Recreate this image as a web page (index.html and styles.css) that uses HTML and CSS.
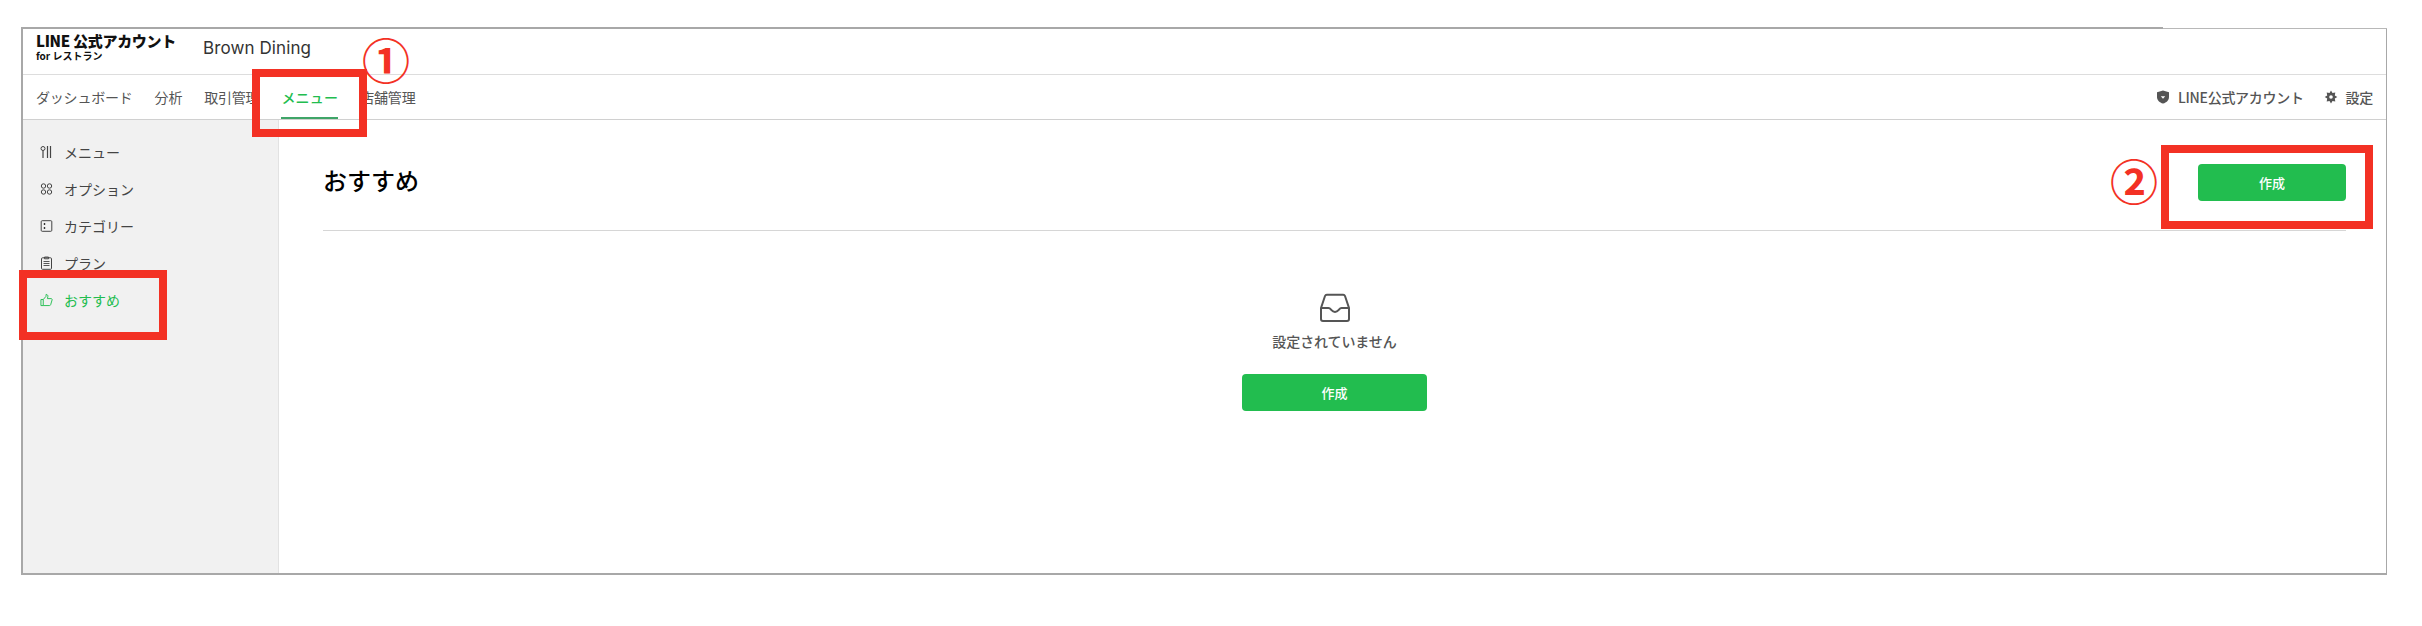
FILE: index.html
```html
<!DOCTYPE html>
<html lang="ja">
<head>
  <meta charset="UTF-8" />
  <title>おすすめ</title>
  <link rel="stylesheet" href="styles.css">
</head>
<body>
  <div class="frame">
    <header class="topbar">
      <div class="logo">
        <div class="logo-main">LINE 公式アカウント</div>
        <div class="logo-sub">for レストラン</div>
      </div>
      <div class="shop">Brown Dining</div>
    </header>

    <nav class="tabs">
      <ul class="tab-list">
        <li><a href="#">ダッシュボード</a></li>
        <li><a href="#">分析</a></li>
        <li><a href="#">取引管理</a></li>
        <li><a href="#" class="active">メニュー</a></li>
        <li><a href="#">店舗管理</a></li>
      </ul>
      <ul class="tab-right">
        <li>
          <svg class="tab-icon" viewBox="0 0 14 14"><path d="M7 .5 13 2.200V7c0 3.400-2.600 5.600-6 6.600C3.600 12.600 1 10.400 1 7V2.200Z" fill="#555"/><path d="M4.800 6.200h4.400L7 8.800Z" fill="#fff"/></svg>
          LINE公式アカウント
        </li>
        <li>
          <svg class="tab-icon" viewBox="0 0 14 14"><path d="M7 .6 8.500 3 11.300 2.500 10.800 5.400 13.300 7 10.800 8.600 11.300 11.500 8.500 11 7 13.400 5.500 11 2.700 11.500 3.200 8.600.7 7 3.200 5.400 2.700 2.500 5.500 3Z" fill="#555"/><circle cx="7" cy="7" r="1.800" fill="#fff"/></svg>
          設定
        </li>
      </ul>
    </nav>

    <div class="main">
      <aside class="sidebar">
        <a href="#" class="side-item">
          <svg class="side-icon" viewBox="0 0 12 14"><circle cx="2.500" cy="3.500" r="2" fill="none" stroke="#444"/><path d="M2.500 5.500V13M7 1v12M10 1v12" fill="none" stroke="#444" stroke-width="1.200"/></svg>
          メニュー
        </a>
        <a href="#" class="side-item">
          <svg class="side-icon" viewBox="0 0 12 14"><g fill="none" stroke="#444"><circle cx="3" cy="4" r="2.200"/><circle cx="9" cy="4" r="2.200"/><circle cx="3" cy="10" r="2.200"/><circle cx="9" cy="10" r="2.200"/></g></svg>
          オプション
        </a>
        <a href="#" class="side-item">
          <svg class="side-icon" viewBox="0 0 12 14"><rect x=".7" y="1.700" width="10.600" height="10.600" rx="1" fill="none" stroke="#444"/><path d="M4 4v2M4 8v2" stroke="#333" stroke-width="1.400"/></svg>
          カテゴリー
        </a>
        <a href="#" class="side-item">
          <svg class="side-icon" viewBox="0 0 12 14"><rect x="1" y="1.800" width="10" height="11.500" rx="1" fill="none" stroke="#444"/><path d="M4 1h4v1.800H4ZM3 5.500h6M3 7.500h6M3 9.500h6" fill="none" stroke="#444" stroke-width=".9"/></svg>
          プラン
        </a>
        <a href="#" class="side-item current">
          <svg class="side-icon" viewBox="0 0 14 14"><path d="M1 6.500h2.500V13H1ZM3.500 6.500 6.500 3V1c1.300 0 2 .8 2 2L8 5.500h4c.8 0 1.300.7 1 1.500l-1.500 5c-.2.600-.6 1-1.300 1H3.500" fill="none" stroke="#22bd4f"/></svg>
          おすすめ
        </a>
      </aside>

      <section class="content">
        <div class="content-head">
          <h2>おすすめ</h2>
          <button class="btn btn-top">作成</button>
        </div>
        <div class="empty">
          <svg class="empty-icon" viewBox="0 0 32 30"><path d="M2 15 6 3c.3-.8 1-1.300 1.800-1.300h16.400c.8 0 1.500.5 1.800 1.300l4 12v11c0 1.200-.9 2-2 2H4c-1.100 0-2-.8-2-2Z M2 15h7.500c1.500 0 2 1 3 2.200s2 1.800 3.500 1.800 2.500-.6 3.500-1.800 1.500-2.200 3-2.200H30" fill="none" stroke="#555" stroke-width="2"/></svg>
          <p>設定されていません</p>
          <button class="btn btn-empty">作成</button>
        </div>
      </section>
    </div>
  </div>

  <!-- annotations drawn over the screenshot -->
  <div class="mark mark-tab"></div>
  <div class="mark mark-side"></div>
  <div class="mark mark-btn"></div>
  <div class="num num-1">①</div>
  <div class="num num-2">②</div>
</body>
</html>
```

FILE: styles.css
```css
* {
  box-sizing: border-box;
}

html, body {
  margin: 0;
  padding: 0;
  background: #fff;
}

body {
  font-family: "Noto Sans CJK JP", "Noto Sans", sans-serif;
  color: #444;
  height: 626px;
  padding: 27px 0 0 21px;
  overflow: hidden;
}

a {
  color: inherit;
  text-decoration: none;
}

ul {
  list-style: none;
  margin: 0;
  padding: 0;
}

.frame {
  position: relative;
  width: 2366px;
  height: 548px;
  border: 2px solid #a8a8a8;
  border-right-width: 1px;
  display: flex;
  flex-direction: column;
}

/* the top right of the frame is a thinner, lighter line */
.frame::before {
  content: "";
  position: absolute;
  left: 2140px;
  right: -1px;
  top: -2px;
  height: 2px;
  background: linear-gradient(#fff 50%, #b8b8b8 50%);
}

.topbar {
  height: 46px;
  flex: none;
  display: flex;
  align-items: center;
  padding-left: 13px;
  border-bottom: 1px solid #ddd;
}

.logo {
  width: 167px;
  margin-top: -9px;
  color: #111;
  line-height: 1;
}

.logo-main {
  font-size: 15px;
  font-weight: 900;
  letter-spacing: -.3px;
  white-space: nowrap;
}

.logo-sub {
  margin-top: 3px;
  font-size: 10px;
  font-weight: 700;
}

.shop {
  margin-top: -7px;
  font-family: "Inter", "Liberation Sans", sans-serif;
  font-size: 17px;
  line-height: 22px;
  letter-spacing: .1px;
  color: #333;
}

.tabs {
  height: 45px;
  flex: none;
  display: flex;
  justify-content: space-between;
  padding: 0 13px;
  border-bottom: 1px solid #d0d0d0;
  font-size: 14px;
}

.tab-list {
  display: flex;
  gap: 22px;
  letter-spacing: -.2px;
}

.tab-list a {
  display: block;
  height: 44px;
  padding-top: 12px;
  line-height: 20px;
  color: #555;
}

.tab-list a.active {
  color: #22bd4f;
  font-weight: 500;
  letter-spacing: .2px;
  border-bottom: 2px solid #3fa568;
}

.tab-right {
  display: flex;
  gap: 20px;
  align-items: center;
  font-size: 14px;
  font-weight: 500;
  letter-spacing: -.3px;
  color: #555;
}

.tab-right li {
  display: flex;
  align-items: center;
  gap: 8px;
}

.tab-icon {
  width: 14px;
  height: 14px;
}

.main {
  flex: 1;
  display: flex;
  min-height: 0;
}

.sidebar {
  width: 256px;
  flex: none;
  background: #f1f1f1;
  border-right: 1px solid #e2e2e2;
  padding-top: 13px;
}

.side-item {
  display: flex;
  align-items: center;
  gap: 11px;
  height: 37px;
  padding-left: 17px;
  font-size: 14px;
  color: #444;
}

.side-item.current {
  color: #22bd4f;
}

.side-icon {
  width: 13px;
  height: 14px;
}

.content {
  flex: 1;
  padding: 0 40px 0 44px;
}

.content-head {
  height: 111px;
  display: flex;
  justify-content: space-between;
  align-items: flex-start;
  border-bottom: 1px solid #d6d6d6;
}

.content-head h2 {
  margin: 42px 0 0;
  font-size: 24px;
  font-weight: 500;
  line-height: 36px;
  color: #000;
}

.btn {
  display: block;
  height: 37px;
  border: none;
  border-radius: 4px;
  background: #22bd4f;
  color: #fff;
  font-family: inherit;
  font-size: 13px;
  font-weight: 500;
}

.btn-top {
  width: 148px;
  margin-top: 44px;
}

.empty {
  display: flex;
  flex-direction: column;
  align-items: center;
  padding-top: 62px;
}

.empty-icon {
  width: 32px;
  height: 30px;
}

.empty p {
  margin: 6px 0 0;
  font-size: 14px;
  font-weight: 500;
  line-height: 24px;
  letter-spacing: -.1px;
  color: #555;
}

.btn-empty {
  width: 185px;
  margin-top: 21px;
}

.mark {
  position: absolute;
  border: 8px solid #f33124;
}

.mark-tab {
  left: 252px;
  top: 69px;
  width: 115px;
  height: 68px;
}

.mark-side {
  left: 19px;
  top: 270px;
  width: 148px;
  height: 70px;
}

.mark-btn {
  left: 2161px;
  top: 145px;
  width: 212px;
  height: 84px;
}

.num {
  position: absolute;
  width: 48px;
  height: 40px;
  color: #f33124;
  font-size: 48px;
  font-weight: 700;
  line-height: 40px;
  text-align: center;
}

.num-1 {
  left: 362px;
  top: 38px;
}

.num-2 {
  left: 2110px;
  top: 159px;
}
```
